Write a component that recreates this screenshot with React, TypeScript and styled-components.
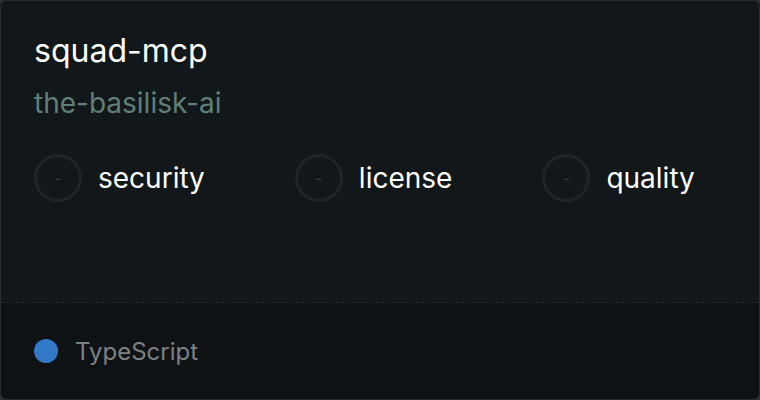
import styled, { createGlobalStyle } from "styled-components"

const GlobalStyle = createGlobalStyle`
  html, body {
    margin: 0;
    padding: 0;
    background: #2a2f32;
  }
  body {
    font-family: Inter, "Noto Sans", sans-serif;
  }
`

const CHECKS = ["security", "license", "quality"]

const App = () => {
  return (
    <>
      <GlobalStyle />
      <StyledCard>
        <StyledBody>
          <StyledTitle>squad-mcp</StyledTitle>
          <StyledOwner>the-basilisk-ai</StyledOwner>
          <StyledChecks>
            {CHECKS.map(check => (
              <StyledCheck key={check}>
                <StyledScore>-</StyledScore>
                <StyledCheckLabel>{check}</StyledCheckLabel>
              </StyledCheck>
            ))}
          </StyledChecks>
        </StyledBody>
        <StyledFooter>
          <StyledLangDot color="#3178c6" />
          <StyledLang>TypeScript</StyledLang>
        </StyledFooter>
      </StyledCard>
    </>
  )
}

export default App

const StyledCard = styled.div`
  width: 760px;
  height: 400px;
  box-sizing: border-box;
  border: 1px solid #262c2f;
  border-radius: 7px;
  background: #121719;
  overflow: hidden;
  display: flex;
  flex-direction: column;
`
const StyledBody = styled.div`
  flex: 1;
  padding: 32px 33px 0;
  display: flex;
  flex-direction: column;
`
const StyledTitle = styled.div`
  color: #ffffff;
  font-size: 32px;
  line-height: 36px;
`
const StyledOwner = styled.div`
  color: #5f7f79;
  font-size: 28px;
  line-height: 34px;
  margin-top: 17px;
`
const StyledChecks = styled.div`
  display: flex;
  gap: 90px;
  margin-top: 34px;
`
const StyledCheck = styled.div`
  display: flex;
  align-items: center;
  gap: 16px;
`
const StyledScore = styled.div`
  width: 48px;
  height: 48px;
  box-sizing: border-box;
  border: 3px solid #1f2527;
  border-radius: 50%;
  display: flex;
  align-items: center;
  justify-content: center;
  color: #34393b;
  font-size: 16px;
`
const StyledCheckLabel = styled.span`
  color: #ffffff;
  font-size: 28px;
`
const StyledFooter = styled.div`
  height: 96px;
  border-top: 1px dashed #262c2f;
  background: #0e1215;
  display: flex;
  align-items: center;
  padding: 0 33px;
  gap: 17px;
`
const StyledLangDot = styled.span<{ color: string }>`
  width: 24px;
  height: 24px;
  border-radius: 50%;
  background: ${p => p.color};
`
const StyledLang = styled.span`
  color: #7d8184;
  font-size: 24px;
`
